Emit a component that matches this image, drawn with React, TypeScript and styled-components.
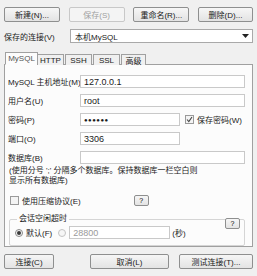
import styled, { createGlobalStyle } from "styled-components";

const GlobalStyle = createGlobalStyle`
  html, body {
    margin: 0;
    padding: 0;
    background: #f0f0f0;
  }
  * { box-sizing: border-box; }
`;

const Window = styled.div`
  width: 257px;
  height: 276px;
  background: #f0f0f0;
  font-family: "Liberation Sans", "Noto Sans CJK SC", sans-serif;
  font-size: 8px;
  color: #1a1a1a;
  padding: 7px 4px 0 4px;
  display: flex;
  flex-direction: column;
  overflow: hidden;
  & > * { flex-shrink: 0; }
`;

const Toolbar = styled.div`
  display: flex;
  justify-content: space-between;
  height: 15px;
`;

const Button = styled.button<{ $w: number; $disabled?: boolean }>`
  width: ${({ $w }) => $w}px;
  height: 15px;
  padding: 0;
  font: inherit;
  color: ${({ $disabled }) => ($disabled ? "#a0a0a0" : "#1a1a1a")};
  background: ${({ $disabled }) =>
    $disabled ? "#f4f4f4" : "linear-gradient(#f6f6f6, #e3e3e3)"};
  border: 1px solid ${({ $disabled }) => ($disabled ? "#c8c8c8" : "#8e8f8f")};
  border-radius: 2px;
  display: flex;
  align-items: center;
  justify-content: center;
  white-space: nowrap;
`;

const SavedRow = styled.div`
  display: flex;
  align-items: center;
  margin-top: 7px;
  height: 14px;
`;

const SavedLabel = styled.span`
  width: 66px;
  white-space: nowrap;
`;

const Select = styled.div`
  flex: 1;
  height: 14px;
  background: #fff;
  border: 1px solid #a9a9a9;
  display: flex;
  align-items: center;
  justify-content: space-between;
  padding: 0 3px 0 4px;
`;

const Tabs = styled.div`
  display: flex;
  align-items: flex-end;
  margin-top: 9px;
  padding-left: 1px;
  height: 13px;
  position: relative;
  z-index: 1;
`;

const Tab = styled.div<{ $active?: boolean; $w: number }>`
  width: ${({ $w }) => $w}px;
  height: ${({ $active }) => ($active ? 13 : 11)}px;
  margin-right: ${({ $active }) => ($active ? -1 : 1)}px;
  background: ${({ $active }) => ($active ? "#fcfcfc" : "#f0f0f0")};
  border: 1px solid #a0a0a0;
  border-bottom: ${({ $active }) => ($active ? "1px solid #fcfcfc" : "none")};
  display: flex;
  align-items: center;
  justify-content: center;
  color: ${({ $active }) => ($active ? "#555" : "#1a1a1a")};
`;

const Panel = styled.div`
  margin-top: -1px;
  height: 183px;
  background: #fcfcfc;
  border: 1px solid #a0a0a0;
  padding: 10px 7px 0 3px;
  display: flex;
  flex-direction: column;
  & > * { flex-shrink: 0; }
`;

const FieldRow = styled.div`
  display: flex;
  align-items: center;
  height: 13px;
  margin-bottom: 6px;
`;

const FieldLabel = styled.span`
  width: 72px;
  flex-shrink: 0;
  white-space: nowrap;
`;

const Input = styled.div<{ $w?: number; $muted?: boolean }>`
  width: ${({ $w }) => ($w ? `${$w}px` : "auto")};
  flex: ${({ $w }) => ($w ? "none" : 1)};
  height: 13px;
  background: #fff;
  border: 1px solid #c9c9c9;
  display: flex;
  align-items: center;
  padding-left: 3px;
  font-size: 9px;
  color: ${({ $muted }) => ($muted ? "#9a9a9a" : "#1a1a1a")};
`;

const Dots = styled.span`
  font-size: 6px;
  letter-spacing: 0.5px;
`;

const CheckLabel = styled.label<{ $ml?: number }>`
  display: flex;
  align-items: center;
  gap: 3px;
  margin-left: ${({ $ml }) => $ml ?? 0}px;
  white-space: nowrap;
`;

const Box = styled.span`
  width: 9px;
  height: 9px;
  border: 1px solid #9a9a9a;
  background: #f4f4f4;
  display: flex;
  align-items: center;
  justify-content: center;
`;

const Note = styled.div`
  margin-top: -4px;
  padding-left: 1px;
  line-height: 10px;
  white-space: nowrap;
`;

const CompressRow = styled.div`
  display: flex;
  align-items: center;
  margin-top: 9px;
  padding-left: 2px;
  height: 11px;
`;

const Help = styled.button<{ $ml?: number }>`
  width: 15px;
  height: 11px;
  padding: 0;
  margin-left: ${({ $ml }) => $ml ?? 0}px;
  font: inherit;
  font-size: 7px;
  background: linear-gradient(#f6f6f6, #e3e3e3);
  border: 1px solid #8e8f8f;
  border-radius: 2px;
  display: flex;
  align-items: center;
  justify-content: center;
`;

const Group = styled.fieldset`
  position: relative;
  margin: 8px 0 0 1px;
  padding: 2px 0 4px 5px;
  border: 1px solid #d5d5d5;
  border-radius: 2px;
  height: 32px;
`;

const Legend = styled.legend`
  padding: 0 2px;
  margin-left: 2px;
  line-height: 10px;
`;

const GroupHelp = styled(Help)`
  position: absolute;
  top: -6px;
  right: 4px;
`;

const RadioRow = styled.div`
  display: flex;
  align-items: center;
  height: 13px;
`;

const Radio = styled.span<{ $on?: boolean }>`
  width: 8px;
  height: 8px;
  border-radius: 50%;
  border: 1px solid ${({ $on }) => ($on ? "#8a8a8a" : "#c4c4c4")};
  background: #f6f6f6;
  display: flex;
  align-items: center;
  justify-content: center;
  margin-right: 3px;
  &::after {
    content: "";
    width: 4px;
    height: 4px;
    border-radius: 50%;
    background: ${({ $on }) => ($on ? "#3a3a3a" : "transparent")};
  }
`;

const RadioText = styled.span<{ $gap: number }>`
  margin: 0 ${({ $gap }) => $gap}px 0 0;
`;

const Footer = styled.div`
  display: flex;
  margin-top: 7px;
`;

const Spacer = styled.span<{ $w: number }>`
  width: ${({ $w }) => $w}px;
  flex-shrink: 0;
`;

export default function App() {
  return (
    <Window>
      <GlobalStyle />
      <Toolbar>
        <Button $w={56}>新建(N)...</Button>
        <Button $w={56} $disabled>保存(S)</Button>
        <Button $w={56}>重命名(R)...</Button>
        <Button $w={55}>删除(D)...</Button>
      </Toolbar>

      <SavedRow>
        <SavedLabel>保存的连接(V)</SavedLabel>
        <Select>
          <span>本机MySQL</span>
          <svg width="7" height="4" viewBox="0 0 7 4">
            <path d="M0 0h7L3.5 4z" fill="#222" />
          </svg>
        </Select>
      </SavedRow>

      <Tabs>
        <Tab $active $w={33}>MySQL</Tab>
        <Tab $w={27}>HTTP</Tab>
        <Tab $w={27}>SSH</Tab>
        <Tab $w={27}>SSL</Tab>
        <Tab $w={25}>高级</Tab>
      </Tabs>

      <Panel>
        <FieldRow>
          <FieldLabel>MySQL 主机地址(M)</FieldLabel>
          <Input>127.0.0.1</Input>
        </FieldRow>
        <FieldRow>
          <FieldLabel>用户名(U)</FieldLabel>
          <Input>root</Input>
        </FieldRow>
        <FieldRow>
          <FieldLabel>密码(P)</FieldLabel>
          <Input $w={100}>
            <Dots>●●●●●●</Dots>
          </Input>
          <CheckLabel $ml={5}>
            <Box>
              <svg width="7" height="7" viewBox="0 0 7 7">
                <path d="M1 3.5l1.8 2L6 1" stroke="#444" strokeWidth="1.1" fill="none" />
              </svg>
            </Box>
            保存密码(W)
          </CheckLabel>
        </FieldRow>
        <FieldRow>
          <FieldLabel>端口(O)</FieldLabel>
          <Input $w={100}>3306</Input>
        </FieldRow>
        <FieldRow>
          <FieldLabel>数据库(B)</FieldLabel>
          <Input />
        </FieldRow>
        <Note>
          (使用分号 ';' 分隔多个数据库。保持数据库一栏空白则
          <br />
          显示所有数据库)
        </Note>
        <CompressRow>
          <CheckLabel>
            <Box />
            使用压缩协议(E)
          </CheckLabel>
          <Help $ml={53}>?</Help>
        </CompressRow>
        <Group>
          <Legend>会话空闲超时</Legend>
          <GroupHelp>?</GroupHelp>
          <RadioRow>
            <Radio $on />
            <RadioText $gap={6}>默认(F)</RadioText>
            <Radio />
            <Input $w={101} $muted>28800</Input>
            <RadioText $gap={0} style={{ marginLeft: 2 }}>(秒)</RadioText>
          </RadioRow>
        </Group>
      </Panel>

      <Footer>
        <Button $w={50}>连接(C)</Button>
        <Spacer $w={36} />
        <Button $w={79}>取消(L)</Button>
        <Spacer $w={10} />
        <Button $w={74}>测试连接(T)...</Button>
      </Footer>
    </Window>
  );
}
